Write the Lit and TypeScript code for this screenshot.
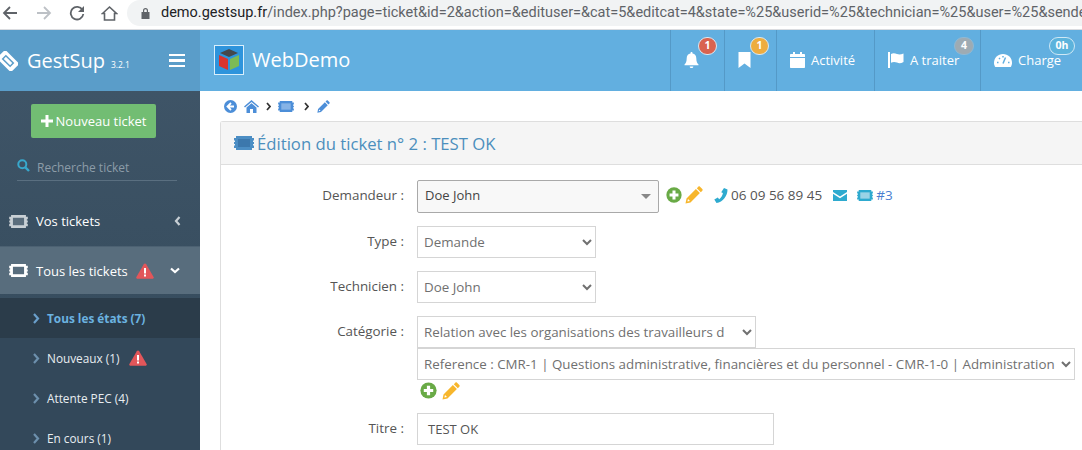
import { LitElement, html, css } from "lit";
import { customElement } from "lit/decorators.js";

const ticket = (w: number, h: number, outer: string, inner: string) => html`<svg width=${w} height=${h} viewBox="0 0 20 14" class="ico">
  <path fill=${outer} d="M2 0H18V2H20V4.500H19V6H20V8H19V9.500H20V12H18V14H2V12H0V9.500H1V8H0V6H1V4.500H0V2H2Z"/>
  <rect x="4" y="3" width="12" height="8" fill=${inner}/>
</svg>`;
const warn = () => html`<svg width="18" height="16" viewBox="0 0 18 16" class="ico">
  <path fill="#e2565a" d="M9 .5c.5 0 .9.3 1.200.8l7.400 12.600c.5.900-.1 1.900-1.100 1.900H1.500c-1 0-1.600-1-1.100-1.900L7.800 1.300C8.100.8 8.500.5 9 .5Z"/>
  <rect x="8" y="5" width="2" height="5.500" fill="#fff"/><rect x="8" y="11.500" width="2" height="2" fill="#fff"/>
</svg>`;
const plus = (s: number) => html`<svg width=${s} height=${s} viewBox="0 0 18 18" class="ico">
  <circle cx="9" cy="9" r="8.600" fill="#69aa46"/><path fill="#fff" d="M7.300 4h3.400v3.300H14v3.400h-3.300V14H7.300v-3.300H4V7.300h3.300Z"/>
</svg>`;
const pencil = (s: number, c: string) => html`<svg width=${s} height=${s} viewBox="0 0 18 18" class="ico">
  <path fill=${c} d="M13.300.7c.5-.5 1.200-.5 1.700 0l2.300 2.300c.5.500.5 1.200 0 1.700l-1.500 1.500-4-4Z"/>
  <path fill=${c} d="M10.900 3.100l4 4L5.500 16.500.5 17.500l1-5ZM3 13l-.6 2.600 2.600-.6Z" fill-rule="evenodd"/>
</svg>`;
const chev = (c: string) => html`<svg width="7" height="11" viewBox="0 0 7 11" class="ico"><path d="M1 1l4 4.500-4 4.500" fill="none" stroke=${c} stroke-width="2.200"/></svg>`;

const nav = (icon: unknown, text: string, badge: string, cls: string, w: number) => html`
  <div class="nav" style="width:${w}px">
    ${icon}${text ? html`<span>${text}</span>` : ""}
    ${badge ? html`<b class="badge ${cls}">${badge}</b>` : ""}
  </div>`;

const bell = html`<svg width="15" height="16" viewBox="0 0 15 16" class="ico"><path fill="#fff" d="M7.500 0c.6 0 1 .4 1 1v.6c2.400.4 3.800 2.300 3.800 4.700 0 3.500.9 4.900 2.200 6.200v.8H.5v-.8c1.300-1.300 2.200-2.700 2.200-6.200 0-2.400 1.400-4.300 3.800-4.700V1c0-.6.400-1 1-1ZM5.700 14.500h3.600c0 1-.8 1.500-1.800 1.500s-1.800-.5-1.800-1.500Z"/></svg>`;
const bookmark = html`<svg width="13" height="16" viewBox="0 0 13 16" class="ico"><path fill="#fff" d="M.5 0h12v16l-6-4.500-6 4.500Z"/></svg>`;
const calendar = html`<svg width="15" height="16" viewBox="0 0 15 16" class="ico"><path fill="#fff" d="M3 0h2v2h5V0h2v2h2c.6 0 1 .4 1 1v2H0V3c0-.6.400-1 1-1h2ZM0 6h15v9c0 .6-.4 1-1 1H1c-.6 0-1-.4-1-1Z"/></svg>`;
const flag = html`<svg width="16" height="16" viewBox="0 0 16 16" class="ico"><path fill="#fff" d="M0 0h2v16H0Z"/><path fill="#fff" d="M3 2c2-1.200 4-.8 6 0 2 .8 4 .6 6.500-.5v8.500c-2.500 1.400-4.500 1.500-6.500.6-2-.9-4-1-6 .2Z"/></svg>`;
const gauge = html`<svg width="18" height="15" viewBox="0 0 18 15" class="ico"><path fill="#fff" d="M9 1c5 0 9 3.800 9 8.700 0 1.700-.5 3.200-1.300 4.300H1.300C.5 12.900 0 11.400 0 9.700 0 4.800 4 1 9 1Z"/><path stroke="#62afe0" stroke-width="1.500" d="M9 10.500L11.500 4.500M3 9.500h1.500M14 9.500h1.500M5 5l1 1M9 3v1.500"/></svg>`;

@customElement("app-root")
export class AppRoot extends LitElement {
  static styles = css`
    :host { display: block; width: 1082px; height: 450px; overflow: hidden; font-family: "Open Sans", sans-serif; background: #fff; color: #393939; }
    .ico { flex: none; display: block; }
    .chrome { height: 30px; display: flex; align-items: flex-start; border-bottom: 1px solid #dadce0; box-sizing: border-box; background: #fff; }
    .btns { width: 127px; height: 26px; display: flex; align-items: center; flex: none; }
    .btns svg { flex: none; }
    .omni { flex: 1; min-width: 0; height: 26px; background: #f1f3f4; border-radius: 13px 0 0 13px; display: flex; align-items: center; padding-left: 14px; font: 14.500px/26px "Roboto", sans-serif; color: #5f6368; white-space: nowrap; overflow: hidden; gap: 11px; }
    .omni b { font-weight: 400; color: #202124; }
    .body { display: flex; height: 420px; }
    .side { width: 200px; flex: none; background: linear-gradient(#405669, #33495a); color: #fff; overflow: hidden; }
    .brand { height: 61px; background: #5a9dc9; display: flex; align-items: center; }
    .brand .logo { margin: 0 9px 0 -2px; }
    .brand .name { font-size: 20px; color: #fff; }
    .brand small { font-size: 8.500px; margin-left: 6px; margin-top: 8px; }
    .burger { margin-left: auto; margin-right: 15px; display: grid; gap: 3.500px; width: 16px; }
    .burger i { display: block; height: 2.200px; background: #fff; }
    .new { width: 125px; height: 34px; margin: 13px 0 0 31px; background: #72bd73; border-radius: 2px; display: flex; align-items: center; justify-content: center; gap: 3px; color: #fff; font-size: 13px; font-weight: 500; }
    .search { margin: 21px 23px 0 17px; height: 22px; border-bottom: 1px solid #5a6f80; display: flex; align-items: flex-start; gap: 7px; font-size: 12px; color: #8c9ca8; line-height: 17px; box-sizing: border-box; }
    .item { display: flex; align-items: center; gap: 8px; font-size: 13px; font-weight: 500; padding-left: 9px; height: 48px; }
    .item.first { margin-top: 18px; margin-bottom: 3px; height: 44px; }
    .item.open { background: #586d7d; height: 48px; border-top: 1px solid #4c6172; box-sizing: border-box; }
    .item .end { margin-left: auto; }
    .item.first .end { margin-right: 19px; }
    .item.open .end { margin-right: 20px; }
    .subs { margin-top: 4px; background: #33485a; }
    .sub { height: 40px; padding-left: 33px; display: flex; align-items: center; gap: 7px; font-size: 11.800px; font-weight: 500; color: #e8edf1; }
    .sub.on { background: #2b3c4a; color: #6bb3e0; font-weight: 700; }
    .sub svg + span + svg { margin-left: 3px; }
    .main { flex: 1; min-width: 0; }
    .top { height: 61px; background: #62afe0; display: flex; align-items: stretch; }
    .cube { margin: 15px 8px 0 14px; }
    .title { color: #fff; font-size: 20px; line-height: 59px; flex: 1; }
    .nav { position: relative; box-sizing: border-box; border-left: 1px solid #5499c7; display: flex; align-items: center; padding: 0 0 1px 13px; gap: 6px; color: #fff; font-size: 13px; font-weight: 500; }
    .badge { position: absolute; top: 7px; height: 18px; border-radius: 10px; min-width: 19px; box-sizing: border-box; border: 1px solid #d9e9f3; font-size: 10.500px; line-height: 15px; text-align: center; color: #fff; font-weight: 700; }
    .b1 { background: #d9634f; right: 7px; }
    .b2 { background: #eead3f; right: 7px; }
    .b3 { background: #9eabb3; right: 6px; border-color: #8fb9d4; width: 20px; }
    .b4 { background: #5cb3dc; right: 7px; width: 26px; border-color: #cfe8f5; border-radius: 9px; }
    .crumbs { height: 30px; display: flex; align-items: center; padding-left: 24px; }
    .panel { margin-left: 20px; border: 1px solid #dedede; border-right: 0; border-radius: 3px 0 0 0; padding-bottom: 40px; }
    .ph { height: 43px; box-sizing: border-box; background: #f5f5f5; border-bottom: 1px solid #dedede; display: flex; align-items: center; padding-left: 13px; gap: 3px; font-size: 16.700px; color: #4c8fbd; }
    .form { display: grid; grid-template-columns: 183px 1fr; column-gap: 13px; row-gap: 13px; padding-top: 15px; align-items: start; font-size: 13.400px; }
    .lbl { text-align: right; color: #555; line-height: 30px; }
    .row { display: flex; align-items: center; }
    .combo { width: 242px; height: 33px; box-sizing: border-box; border: 1px solid #a9a9a9; border-radius: 2px; background: #f8f8f8; display: flex; align-items: center; padding: 0 0 3px 7px; color: #444; font-size: 13px; position: relative; }
    .combo::after { content: ""; position: absolute; right: 7px; top: 13px; border: 5px solid transparent; border-top: 5px solid #888; }
    .tools { display: flex; align-items: center; margin-left: 7px; gap: 3px; color: #555; font-size: 13.500px; padding-bottom: 3px; }
    .tools span { white-space: nowrap; }
    .phone { margin-left: 8px; }
    .mail { margin-left: 8px; }
    .tk { margin-left: 7px; }
    .fld { box-sizing: border-box; height: 32px; border: 1px solid #d5d5d5; background: #fff; font: 13.350px "Open Sans", sans-serif; color: #707070; padding: 0 2px; display: block; border-radius: 0; }
    .w1 { width: 179px; }
    .w2 { width: 339px; }
    .w3 { width: 658px; }
    .w4 { width: 357px; padding: 0 10px; color: #555; display: flex; align-items: center; font-size: 13px; }
    .adds { display: flex; gap: 5px; padding: 1px 0 0 3px; height: 19px; align-items: center; }
    .b-l { margin-left: 7px; }
    .c-l { margin-left: 10px; }
    .p-l { margin-left: 8px; }
    .ref { color: #4a7fd1; }
    .b2-l { margin-left: 2px; }
    .f-l { margin-left: 18px; }
    .r-l { margin-left: 17px; }
    .h-l { margin-left: 16px; }
    .cube-bg { fill: #2e94dc; stroke: #d8eefb; }
  `;

  render() {
    return html`
      <div class="chrome">
        <div class="btns">
          <svg class="b2-l" width="16" height="16" viewBox="0 0 16 16"><path d="M15 8H2M8 2L2 8l6 6" fill="none" stroke="#5f6368" stroke-width="1.800"/></svg>
          <svg class="f-l" width="16" height="16" viewBox="0 0 16 16"><path d="M1 8h13M8 2l6 6-6 6" fill="none" stroke="#bdc1c6" stroke-width="1.800"/></svg>
          <svg class="r-l" width="16" height="16" viewBox="0 0 16 16"><path d="M13.500 5A6.300 6.300 0 1 0 14.300 9" fill="none" stroke="#5f6368" stroke-width="1.800"/><path d="M15 1v6H9Z" fill="#5f6368"/></svg>
          <svg class="h-l" width="17" height="17" viewBox="0 0 17 17"><path d="M1.500 8.500L8.500 2l7 6.500H13.500V15H3.500V8.500Z" fill="none" stroke="#5f6368" stroke-width="1.600"/></svg>
        </div>
        <div class="omni">
          <svg width="9" height="12" viewBox="0 0 9 12" class="ico"><path fill="#5f6368" d="M2 5V3.500a2.500 2.500 0 0 1 5 0V5h1.500v7H.5V5ZM3.200 5h2.600V3.500a1.300 1.300 0 0 0-2.600 0Z"/></svg>
          <span><b>demo.gestsup.fr</b>/index.php?page=ticket&amp;id=2&amp;action=&amp;edituser=&amp;cat=5&amp;editcat=4&amp;state=%25&amp;userid=%25&amp;technician=%25&amp;user=%25&amp;sende</span>
        </div>
      </div>
      <div class="body">
        <aside class="side">
          <div class="brand">
            <svg class="logo ico" width="20" height="20" viewBox="0 0 20 20"><g transform="rotate(45 10 10)"><path fill="#fff" d="M0 4h20v12H0Z"/><rect x="4" y="7" width="12" height="6" fill="#5a9dc9"/><rect x="5.500" y="8.500" width="9" height="3" fill="#fff"/></g></svg>
            <span class="name">GestSup</span><small>3.2.1</small>
            <div class="burger"><i></i><i></i><i></i></div>
          </div>
          <div class="new">
            <svg width="12" height="12" viewBox="0 0 12 12" class="ico"><path fill="#fff" d="M4.500 0h3v4.500H12v3H7.500V12h-3V7.500H0v-3h4.500Z"/></svg>
            <span>Nouveau ticket</span>
          </div>
          <div class="search">
            <svg width="13" height="13" viewBox="0 0 13 13" class="ico"><circle cx="5.300" cy="5.300" r="4" fill="none" stroke="#38a8cc" stroke-width="2"/><path d="M8.300 8.300l3.700 3.700" stroke="#38a8cc" stroke-width="2.400"/></svg>
            <span>Recherche ticket</span>
          </div>
          <div class="item first">
            ${ticket(19, 13, "#c9d0d5", "#5a6d7c")}<span>Vos tickets</span>
            <svg class="end ico" width="7" height="10" viewBox="0 0 7 10"><path d="M5.500 1L2 5l3.500 4" fill="none" stroke="#c7cfd5" stroke-width="2.200"/></svg>
          </div>
          <div class="item open">
            ${ticket(19, 13, "#fff", "#586d7d")}<span>Tous les tickets</span>${warn()}
            <svg class="end ico" width="10" height="7" viewBox="0 0 10 7"><path d="M1 1.500L5 5l4-3.500" fill="none" stroke="#fff" stroke-width="2.200"/></svg>
          </div>
          <div class="subs">
            <div class="sub on">${chev("#6a9fcb")}<span>Tous les états (7)</span></div>
            <div class="sub">${chev("#6d90ad")}<span>Nouveaux (1)</span>${warn()}</div>
            <div class="sub">${chev("#6d90ad")}<span>Attente PEC (4)</span></div>
            <div class="sub">${chev("#6d90ad")}<span>En cours (1)</span></div>
          </div>
        </aside>
        <main class="main">
          <div class="top">
            <svg class="cube ico" width="30" height="30" viewBox="0 0 30 30">
              <rect class="cube-bg" x=".5" y=".5" width="29" height="29"/>
              <path fill="#45484c" d="M15 4l9 4-9 4-9-4Z"/>
              <path fill="#d9332f" d="M5 10l9 4v11l-9-4Z"/>
              <path fill="#7dbb55" d="M25 10l-9 4v11l9-4Z"/>
            </svg>
            <div class="title">WebDemo</div>
            ${nav(bell, "", "1", "b1", 54)}
            ${nav(bookmark, "", "1", "b2", 52)}
            ${nav(calendar, "Activité", "", "", 98)}
            ${nav(flag, "A traiter", "4", "b3", 106)}
            ${nav(gauge, "Charge", "0h", "b4", 102)}
          </div>
          <div class="crumbs">
            <svg class="ico" width="13" height="13" viewBox="0 0 13 13"><circle cx="6.500" cy="6.500" r="6.500" fill="#4c8ed8"/><path d="M7 3L3.500 6.500 7 10M4 6.500h6" fill="none" stroke="#fff" stroke-width="1.800"/></svg>
            <svg class="ico b-l" width="15" height="13" viewBox="0 0 15 13"><path fill="#4c8ed8" d="M7.500 0l7.500 6.500-1 1-6.500-5.500L1 7.500l-1-1ZM2.500 7.500l5-4.200 5 4.200V13H9V9H6v4H2.500Z"/></svg>
            <svg class="ico b-l" width="5" height="9" viewBox="0 0 5 9"><path d="M1 1l3 3.500L1 8" fill="none" stroke="#333" stroke-width="1.700"/></svg>
            <span class="b-l">${ticket(16, 11, "#4c8ed8", "#86b3e6")}</span>
            <svg class="ico c-l" width="5" height="9" viewBox="0 0 5 9"><path d="M1 1l3 3.500L1 8" fill="none" stroke="#333" stroke-width="1.700"/></svg>
            <span class="p-l">${pencil(13, "#4c8ed8")}</span>
          </div>
          <section class="panel">
            <div class="ph">${ticket(20, 14, "#4c8ec4", "#3c78ad")}<span>Édition du ticket n° 2 : TEST OK</span></div>
            <div class="form">
              <div class="lbl">Demandeur :</div>
              <div class="row">
                <div class="combo">Doe John</div>
                <div class="tools">
                  ${plus(16)}${pencil(18, "#f7b62c")}
                  <svg class="ico phone" width="14" height="15" viewBox="0 0 14 15"><path fill="#2eaacf" d="M10 0l3.500 1.500C13.500 8 9 14 2.500 15L.3 11.500l3.500-2 1.400 1.700C7 10 8.700 7.300 8.900 5L7.200 4.200Z"/></svg>
                  <span>06 09 56 89 45</span>
                  <svg class="ico mail" width="14" height="11" viewBox="0 0 14 11"><path fill="#2eaacf" d="M0 0h14v2L7 6.500 0 2ZM0 3.800L7 8.300l7-4.500V11H0Z"/></svg>
                  <span class="tk">${ticket(16, 11, "#2eaacf", "#9ad3e6")}</span>
                  <span class="ref">#3</span>
                </div>
              </div>
              <div class="lbl">Type :</div>
              <select class="fld w1"><option>Demande</option></select>
              <div class="lbl">Technicien :</div>
              <select class="fld w1"><option>Doe John</option></select>
              <div class="lbl">Catégorie :</div>
              <div>
                <select class="fld w2"><option>Relation avec les organisations des travailleurs d</option></select>
                <select class="fld w3"><option>Reference : CMR-1 | Questions administrative, financières et du personnel - CMR-1-0 | Administration</option></select>
                <div class="adds">${plus(17)}${pencil(18, "#f7b62c")}</div>
              </div>
              <div class="lbl">Titre :</div>
              <div class="fld w4">TEST OK</div>
            </div>
          </section>
        </main>
      </div>
    `;
  }
}
